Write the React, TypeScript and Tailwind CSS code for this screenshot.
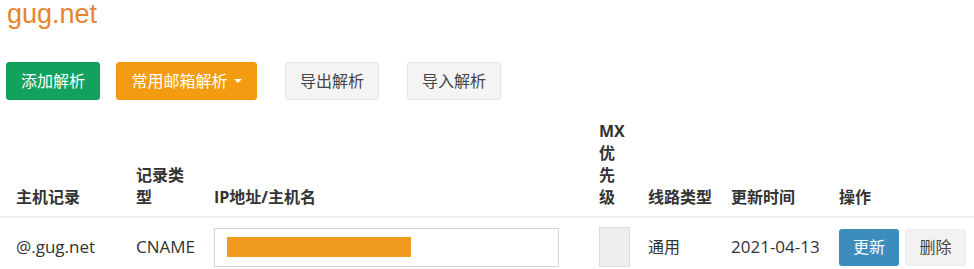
import React from "react";

const F = "font-['Open_Sans','Noto_Sans_CJK_SC',sans-serif]";

export default function App() {
  return (
    <div className={`${F} w-[974px] h-[269px] overflow-hidden bg-white pl-[6px] text-[16px] text-[#333]`}>
      <h1 className="font-['Liberation_Sans',Arial,sans-serif] text-[27px] leading-[29px] text-[#e8832e] ml-[1px] font-normal">
        gug.net
      </h1>
      <div className="mt-[33px] flex items-center">
        <button className="h-[38px] w-[94px] rounded-[3px] bg-[#12a25e] text-white text-[16px] leading-[20px] border border-[#0f9a57]">
          添加解析
        </button>
        <button className="ml-[16px] h-[38px] w-[141px] rounded-[3px] bg-[#f39c12] text-white text-[16px] leading-[20px] border border-[#ef960c] flex items-center justify-center">
          <span>常用邮箱解析</span>
          <span className="ml-[6px] w-0 h-0 border-l-[4px] border-r-[4px] border-t-[4px] border-l-transparent border-r-transparent border-t-white"></span>
        </button>
        <button className="ml-[28px] h-[38px] w-[94px] rounded-[3px] bg-[#f4f4f4] text-[#444] text-[16px] leading-[20px] border border-[#e3e3e3]">
          导出解析
        </button>
        <button className="ml-[28px] h-[38px] w-[94px] rounded-[3px] bg-[#f4f4f4] text-[#444] text-[16px] leading-[20px] border border-[#e3e3e3]">
          导入解析
        </button>
      </div>
      <table className="mt-[12px] ml-[-6px] table-fixed w-[974px] border-collapse">
        <colgroup>
          <col className="w-[128px]" />
          <col className="w-[78px]" />
          <col className="w-[385px]" />
          <col className="w-[49px]" />
          <col className="w-[83px]" />
          <col className="w-[108px]" />
          <col className="w-[143px]" />
        </colgroup>
        <thead>
          <tr className="border-b-2 border-[#f0f0f0]">
            <th className="align-bottom text-left font-bold leading-[22px] pl-[16px] pr-[8px] py-[8px] whitespace-nowrap">主机记录</th>
            <th className="align-bottom text-left font-bold leading-[22px] px-[8px] py-[8px] whitespace-nowrap">
              记录类<br />型
            </th>
            <th className="align-bottom text-left font-bold leading-[22px] px-[8px] py-[8px] whitespace-nowrap">IP地址/主机名</th>
            <th className="align-bottom text-left font-bold leading-[22px] px-[8px] py-[8px] whitespace-nowrap">
              MX<br />优<br />先<br />级
            </th>
            <th className="align-bottom text-left font-bold leading-[22px] px-[8px] py-[8px] whitespace-nowrap">线路类型</th>
            <th className="align-bottom text-left font-bold leading-[22px] px-[8px] py-[8px] whitespace-nowrap">更新时间</th>
            <th className="align-bottom text-left font-bold leading-[22px] px-[8px] py-[8px] whitespace-nowrap">操作</th>
          </tr>
        </thead>
        <tbody>
          <tr>
            <td className="align-middle pl-[16px] pr-[8px] pt-[9px] pb-[8px] whitespace-nowrap text-[17px]">@.gug.net</td>
            <td className="align-middle px-[8px] pt-[9px] pb-[8px] whitespace-nowrap text-[17px]">CNAME</td>
            <td className="align-middle px-[8px] pt-[9px] pb-[8px]">
              <div className="w-[345px] h-[39px] border border-[#d2d6de] bg-white flex items-center pl-[12px]">
                <div className="w-[184px] h-[20px] bg-[#f09a20]"></div>
              </div>
            </td>
            <td className="align-middle px-[8px] pt-[9px] pb-[8px]">
              <div className="w-[31px] h-[40px] border border-[#dcdcdc] bg-[#eeeeee]"></div>
            </td>
            <td className="align-middle px-[8px] pt-[9px] pb-[8px] whitespace-nowrap">通用</td>
            <td className="align-middle px-[8px] pt-[9px] pb-[8px] whitespace-nowrap text-[17px]">2021-04-13</td>
            <td className="align-middle px-[8px] pt-[9px] pb-[8px] whitespace-nowrap">
              <div className="flex gap-[6px]">
                <button className="w-[62px] h-[37px] rounded-[3px] bg-[#3c8dbc] text-white text-[16px] leading-[20px]">更新</button>
                <button className="w-[63px] h-[37px] rounded-[3px] bg-[#f2f2f2] text-[#444] text-[16px] leading-[20px] border border-[#eeeeee]">删除</button>
              </div>
            </td>
          </tr>
        </tbody>
      </table>
    </div>
  );
}
